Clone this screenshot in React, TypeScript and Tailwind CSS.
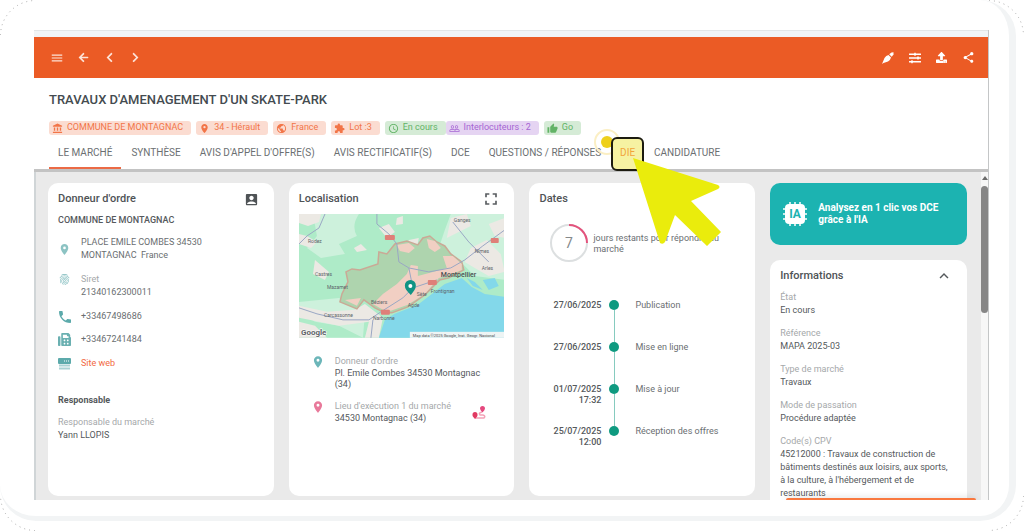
import React from 'react';
import {
  MdAccountBalance,
  MdAccountBox,
  MdExtension,
  MdFingerprint,
  MdFullscreen,
  MdKeyboardArrowUp,
  MdMenu,
  MdPeopleOutline,
  MdPhone,
  MdPlace,
  MdPublic,
  MdSchedule,
  MdShare,
  MdThumbUp,
} from 'react-icons/md';
import { FaArrowLeft, FaChevronLeft, FaChevronRight, FaFax, FaSlidersH, FaUpload } from 'react-icons/fa';

const chips = [
  { label: 'COMMUNE DE MONTAGNAC', icon: MdAccountBalance, tone: 'bg-[#fbdcd1] text-[#f27548] mr-[5px]' },
  { label: '34 - Hérault', icon: MdPlace, tone: 'bg-[#fbdcd1] text-[#f27548] mr-[5px]' },
  { label: 'France', icon: MdPublic, tone: 'bg-[#fbdcd1] text-[#f27548] mr-[5px]' },
  { label: 'Lot :3', icon: MdExtension, tone: 'bg-[#fbdcd1] text-[#f27548] mr-[5px]' },
  { label: 'En cours', icon: MdSchedule, tone: 'bg-[#d5ebd6] text-[#62b366]' },
  { label: 'Interlocuteurs : 2', icon: MdPeopleOutline, tone: 'bg-[#e5d4f2] text-[#a565d3] mr-[5px]' },
  { label: 'Go', icon: MdThumbUp, tone: 'bg-[#d5ebd6] text-[#62b366]' },
];

const tabs = [
  'LE MARCHÉ',
  'SYNTHÈSE',
  "AVIS D'APPEL D'OFFRE(S)",
  'AVIS RECTIFICATIF(S)',
  'DCE',
  'QUESTIONS / RÉPONSES',
  'DIE',
  'CANDIDATURE',
];

const steps = [
  { date: '27/06/2025', time: '', label: 'Publication' },
  { date: '27/06/2025', time: '', label: 'Mise en ligne' },
  { date: '01/07/2025', time: '17:32', label: 'Mise à jour' },
  { date: '25/07/2025', time: '12:00', label: 'Réception des offres' },
];

const infos = [
  { label: 'État', value: 'En cours' },
  { label: 'Référence', value: 'MAPA 2025-03' },
  { label: 'Type de marché', value: 'Travaux' },
  { label: 'Mode de passation', value: 'Procédure adaptée' },
  {
    label: 'Code(s) CPV',
    value: "45212000 : Travaux de construction de bâtiments destinés aux loisirs, aux sports, à la culture, à l'hébergement et de restaurants",
  },
];

function Corner({ className }: { className: string }) {
  return (
    <svg className={`absolute size-9 ${className}`} viewBox="0 0 36 36" fill="none" aria-hidden="true">
      <path d="M0.5 35 A35 35 0 0 1 35 0.5" stroke="#aaa" strokeWidth="1" strokeDasharray="1 4" />
    </svg>
  );
}

function TopBar() {
  return (
    <header className="flex h-[41px] shrink-0 items-center justify-between bg-[#eb5b25] pr-[13px] pl-4 text-[#fde3d8]">
      <div className="flex items-center gap-3">
        <button aria-label="Menu"><MdMenu size={14} /></button>
        <button aria-label="Retour" className="flex w-[14px] justify-center"><FaArrowLeft size={11} /></button>
        <button aria-label="Précédent" className="flex w-[14px] justify-center"><FaChevronLeft size={11} /></button>
        <button aria-label="Suivant" className="flex w-[14px] justify-center"><FaChevronRight size={11} /></button>
      </div>
      <div className="flex items-center gap-[15px] text-white">
        <button aria-label="Annoter">
          <svg width="12" height="12" viewBox="0 0 12 12" fill="currentColor" aria-hidden="true">
            <path d="M0 12 L2.500 6 Q4 3.500 6.500 3 L9 5.500 Q8.500 8 6 9.500 L1.500 11Z" />
            <path d="M7.200 2.300 L9.500 0.500 L11.500 0.300 L11.500 2.500 L9.700 4.800Z" />
          </svg>
        </button>
        <button aria-label="Filtrer"><FaSlidersH size={12} /></button>
        <button aria-label="Exporter"><FaUpload size={11} /></button>
        <button aria-label="Partager"><MdShare size={13} /></button>
      </div>
    </header>
  );
}

function Pointer() {
  return (
    <>
      <span className="absolute -top-[8px] -left-[17px] size-[26px] rounded-full border-2 border-[#fbefc4] p-[5px]">
        <span className="block size-3 rounded-full bg-[#eed01c]" />
      </span>
      <span className="absolute inset-x-0 top-0 h-[34px] rounded-md border-2 border-[#1c1b10] bg-[#f6f2a2]" />
      <svg className="absolute top-5 left-[21px] h-[90px] w-[90px]" viewBox="0 0 90 90" aria-hidden="true">
        <path
          d="M1 1 L86 28 Q89 30 86 32 L59 44 L89 75 L75 89 L43 58 L33 85 Q31 88 28 86 Z"
          fill="#eaec0c"
        />
      </svg>
    </>
  );
}

function Heading() {
  return (
    <div className="relative z-10 shrink-0 border-b-[3px] border-[#c3c3c3] bg-white px-[15px]">
      <h1 className="pt-[14px] text-[13px] leading-4 font-medium text-[#444b50]">
        TRAVAUX D'AMENAGEMENT D'UN SKATE-PARK
      </h1>
      <div className="mt-[13px] flex">
        {chips.map(({ label, icon: Icon, tone }) => (
          <span key={label} className={`flex h-[14px] items-center gap-1 rounded-[3px] pr-2 pl-[3px] text-[9px] whitespace-nowrap ${tone}`}>
            <Icon size={11} />
            {label}
          </span>
        ))}
      </div>
      <nav className="mt-[2px] flex gap-px text-[10px] text-[#6b6f72]">
        {tabs.map((tab, i) => (
          <a
            key={tab}
            href="#"
            className={`relative h-8 px-[9px] leading-8 whitespace-nowrap ${i === 0 ? 'shadow-[inset_0_-2px_0_#eb6a45]' : ''}`}
          >
            {tab === 'DIE' && <Pointer />}
            <span className={tab === 'DIE' ? 'relative text-[#f2a43a]' : ''}>{tab}</span>
          </a>
        ))}
      </nav>
    </div>
  );
}

function Card({ title, action, children }: { title: string; action?: React.ReactNode; children: React.ReactNode }) {
  return (
    <section className="rounded-[10px] bg-white px-[10px] pt-2">
      <div className="flex h-4 items-center justify-between">
        <h2 className="text-[11px] font-medium text-[#4f5356]">{title}</h2>
        {action}
      </div>
      {children}
    </section>
  );
}

function Buyer() {
  return (
    <Card title="Donneur d'ordre" action={<button aria-label="Contacts" className="mr-[5px]"><MdAccountBox size={15} color="#4f5356" /></button>}>
      <p className="mt-[5px] text-[9px] leading-4 font-medium">COMMUNE DE MONTAGNAC</p>
      <ul className="mt-2 text-[9px] leading-[13px] text-[#6a6e71]">
        <li className="flex items-center gap-[10px]">
          <MdPlace size={13} color="#8cc3c3" />
          <span>PLACE EMILE COMBES 34530<br />MONTAGNAC&nbsp; France</span>
        </li>
        <li className="mt-[11px] flex gap-[10px]">
          <MdFingerprint size={13} color="#7ab8ba" />
          <span><span className="text-[#a5a8aa]">Siret</span><br />21340162300011</span>
        </li>
        <li className="mt-[11px] flex items-center gap-[10px]">
          <span className="flex h-[13px] w-[13px] items-center justify-center"><MdPhone className="shrink-0" size={16} color="#5caaab" /></span>
          +33467498686
        </li>
        <li className="mt-[10px] flex items-center gap-[10px]"><FaFax size={13} color="#6ab0b1" />+33467241484</li>
        <li className="mt-[11px] flex items-center gap-[10px]">
          <svg width="13" height="12" viewBox="0 0 13 12" aria-hidden="true">
            <rect width="13" height="6" rx="1" fill="#5caaab" />
            <path d="M6 3h1M8 3h1M10 3h1" stroke="#fff" />
            <path d="M1 7.5h11M1 10.5h11" stroke="#a9d2d3" strokeWidth="2" />
          </svg>
          <a href="#" className="text-[#f2693f]">Site web</a>
        </li>
      </ul>
      <h3 className="mt-[22px] text-[9px] leading-4 font-bold">Responsable</h3>
      <p className="mt-2 text-[9px] leading-[13px] text-[#a5a8aa]">Responsable du marché</p>
      <p className="text-[9px] leading-[13px]">Yann LLOPIS</p>
    </Card>
  );
}

function RegionMap() {
  return (
    <svg className="mt-[7px] block w-full" viewBox="0 0 206 124" fontFamily="Roboto, sans-serif" aria-label="Carte">
      <rect width="206" height="124" fill="#aeebc8" />
      <g fill="#cdf1dc">
        <path d="M14 0 L60 0 Q52 12 58 22 L40 30 L46 40 L22 44 L8 34 L18 22Z" />
        <path d="M152 0 L206 0 L206 66 L176 62 L158 44 L140 34 L146 16Z" />
        <path d="M0 88 L40 84 L66 100 L64 124 L40 112 L16 108 L0 98Z" />
      </g>
      <g fill="#ece9e4">
        <path d="M0 0 L22 0 L20 8 L9 12 L0 9Z" />
        <path d="M0 20 L8 22 L18 28 L12 34 L0 30Z" />
        <path d="M80 14 L90 10 L96 18 L88 24Z" />
        <path d="M98 4 L104 2 L104 10 L97 11Z" />
        <path d="M55 34 L62 30 L68 36 L58 38Z" />
        <path d="M16 46 L30 58 L26 66 L14 60Z" />
        <path d="M110 26 L120 24 L118 34 L108 32Z" />
        <path d="M152 4 L168 0 L172 12 L160 18 L148 24Z" />
        <path d="M172 34 L188 26 L202 40 L206 58 L190 62 L176 54 L166 48Z" />
        <path d="M190 10 L206 4 L206 24 L196 22Z" />
        <path d="M0 92 L28 98 L56 96 L66 90 L84 104 L80 124 L66 124 L70 108 L40 112 L0 104Z" />
        <path d="M0 108 L16 112 L28 124 L0 124Z" />
      </g>
      <path d="M206 83 L186 80 L173 73 L163 64 L146 70 L133 80 L119 91 L96 100 L86 106 L80 124 L206 124Z" fill="#83d8ea" />
      <path d="M184 66 L196 64 L200 72 L190 76Z M168 64 L176 68 L184 76 L174 72Z" fill="#83d8ea" />
      <path
        d="M43 80 L49 68 L47 58 L53 55 L61 56 L79 50 L80 38 L88 40 L96 30 L108 27 L119 31 L124 24 L131 22 L138 28 L146 32 L152 40 L163 48 L165 56 L150 64 L141 66 L126 81 L109 93 L93 99 L86 99 L76 94 L65 86 L58 95 L41 88Z"
        fill="#aed4ae"
        stroke="#caa996"
        strokeWidth="1.500"
      />
      <g fill="#f1cfc3">
        <path d="M98 31 L110 29 L116 34 L110 39 L101 37Z" />
        <path d="M128 25 L136 27 L142 34 L136 38 L130 34Z" />
        <path d="M144 42 L154 42 L163 50 L163 56 L148 62 L140 64 L126 80 L109 91 L92 97 L84 96 L74 90 L84 80 L98 70 L108 60 L112 51 L119 52 L119 62 L134 58 L148 54Z" />
        <path d="M46 86 L62 84 L58 92Z" />
      </g>
      <g fill="none" stroke="#9aa7c4" strokeWidth="1">
        <path d="M26 0 L20 14 L8 22 L0 30" />
        <path d="M78 0 L78 10 L90 20 L98 30 L100 48 L110 54 L130 58 L152 54 L166 46 L184 32 L206 16" />
        <path d="M0 94 L18 100 L44 106 L70 106 L82 98 L104 84 L114 74 L138 66" />
        <path d="M114 74 L110 54 M154 8 L170 28 L190 48 M74 106 L72 124" />
      </g>
      <g fill="#df7f78">
        <rect x="86" y="21" width="10" height="5" rx="1" />
        <rect x="192" y="24" width="8" height="5" rx="1" />
        <rect x="129" y="66" width="9" height="5" rx="1" />
        <rect x="82" y="96" width="9" height="5" rx="1" />
      </g>
      <g fill="#5c6468" fontSize="5">
        <text x="155" y="8">Ganges</text>
        <text x="9" y="29">Rodez</text>
        <text x="176" y="39">Nîmes</text>
        <text x="183" y="56">Arles</text>
        <text x="16" y="62">Castres</text>
        <text x="28" y="75">Mazamet</text>
        <text x="72" y="90">Béziers</text>
        <text x="25" y="103">Carcassonne</text>
        <text x="74" y="106">Narbonne</text>
        <text x="109" y="93">Agde</text>
        <text x="132" y="79">Frontignan</text>
        <text x="118" y="82">Sète</text>
      </g>
      <text x="142" y="63" fontSize="7" fontWeight="500" fill="#4b4f52">Montpellier</text>
      <path d="M112 81 C108 77 106 75 106 71.500 A5.500 5.500 0 0 1 117 71.500 C117 75 115 77 112 81Z" fill="#109384" />
      <circle cx="111.500" cy="72" r="2" fill="#fff" />
      <rect x="111" y="118" width="95" height="6" fill="#eef4f4" />
      <text x="114" y="123" fontSize="4" fill="#45494c">Map data ©2025 Google, Inst. Geogr. Nacional</text>
      <text x="2" y="121" fontSize="8" fontWeight="700" fill="#5d6366" stroke="#fff" strokeWidth="1" paintOrder="stroke">Google</text>
    </svg>
  );
}

function Location() {
  return (
    <Card title="Localisation" action={<button aria-label="Plein écran" className="mr-[3px]"><MdFullscreen size={20} color="#5a5e61" /></button>}>
      <RegionMap />
      <ul className="mt-[17px] text-[9px] leading-[11px]">
        <li className="flex gap-[10px] pl-3">
          <MdPlace size={14} className="shrink-0" color="#6cb6b9" />
          <p className="pr-4"><span className="block leading-[13px] text-[#a5a8aa]">Donneur d'ordre</span>Pl. Emile Combes 34530 Montagnac (34)</p>
        </li>
        <li className="mt-[10px] flex gap-[10px] pl-3">
          <MdPlace size={14} className="shrink-0" color="#e8799a" />
          <p className="flex-1"><span className="block leading-[13px] text-[#a5a8aa]">Lieu d'exécution 1 du marché</span>34530 Montagnac (34)</p>
          <svg className="mt-[6px] mr-[18px]" width="14" height="14" viewBox="0 0 14 14" fill="none" aria-hidden="true">
            <path d="M3 12 H12 Q14 10 11 9 H8 Q6 7 10 6" stroke="#f3a3b8" strokeWidth="1.500" />
            <path d="M3 13 Q0 10 0.500 8.500 A2.500 2.500 0 0 1 5.500 8.500 Q6 10 3 13Z" fill="#e13a62" />
            <path d="M10.500 6.500 Q8 4 8 2.500 A2.500 2.500 0 0 1 13 2.500 Q13 4 10.500 6.500Z" fill="#e5487e" />
          </svg>
        </li>
      </ul>
    </Card>
  );
}

function Dates() {
  return (
    <Card title="Dates">
      <div className="mt-4 flex gap-1 pr-4 pl-[10px] text-[9px] leading-[11px] text-[#6a6e71]">
        <svg className="shrink-0" width="40" height="40" viewBox="0 0 40 40" fill="none">
          <circle cx="20" cy="20" r="18" stroke="#dcdfe0" strokeWidth="2" />
          <path d="M20 2 A18 18 0 0 1 38 20" stroke="#e4527c" strokeWidth="2" />
          <text x="20" y="25" textAnchor="middle" fontSize="14" fill="#85898b">7</text>
        </svg>
        <p className="pt-[10px]">jours restants pour répondre au marché</p>
      </div>
      <ol className="mt-9 text-[9px] leading-[11px]">
        {steps.map((step, i) => (
          <li key={i} className="flex h-[42px]">
            <p className="w-[62px] pt-px text-right font-medium">{step.date}<br />{step.time}</p>
            <span className="ml-2 flex flex-col items-center">
              <span className="mt-px size-[10px] shrink-0 rounded-full bg-[#0f9a80]" />
              {i < steps.length - 1 && <span className="-mb-px w-px flex-1 bg-[#86cbbf]" />}
            </span>
            <p className="ml-4 pt-px text-[#6a6e71]">{step.label}</p>
          </li>
        ))}
      </ol>
    </Card>
  );
}

function AiButton() {
  return (
    <button className="flex h-[62px] shrink-0 items-center gap-[10px] rounded-[10px] bg-[#1cb3b1] px-3 text-left text-[10px] leading-3 font-bold text-white">
      <svg className="shrink-0" width="26" height="26" viewBox="0 0 26 26" fill="none" aria-hidden="true">
        <path d="M8 1v24M13 1v24M18 1v24M1 8h24M1 13h24M1 18h24" stroke="#fff" strokeWidth="1.500" />
        <rect x="3" y="3" width="20" height="20" rx="4" fill="#fff" />
        <text x="13" y="17" textAnchor="middle" fontSize="12" fontWeight="700" fill="#1cb3b1">IA</text>
      </svg>
      <span>Analysez en 1 clic vos DCE grâce à l'IA</span>
    </button>
  );
}

export default function App() {
  return (
    <div className="relative flex h-screen bg-white pr-2 pb-[10px] font-[Roboto,sans-serif] text-[#55595c]">
      <Corner className="top-0 left-0" />
      <Corner className="top-0 right-0 rotate-90" />
      <Corner className="right-0 bottom-0 rotate-180" />
      <Corner className="bottom-0 left-0 -rotate-90" />
      <div className="flex min-w-0 flex-1 rounded-r-[36px] rounded-bl-[36px] border-r-[7px] border-b-[5px] border-[#f2f4f5] pt-[30px] pr-5 pb-4 pl-[34px]">
        <div className="relative flex min-w-0 flex-1 flex-col overflow-hidden border-r border-[#c4c6c7]">
          <div className="h-[7px] shrink-0 border-t border-[#e2e5e6] bg-[#f1f4f6]" />
          <TopBar />
          <Heading />
          <div className="flex min-h-0 flex-1 border-l-2 border-[#d0d5d7] bg-[#eaeaea]">
            <main className="grid min-w-0 flex-1 grid-cols-[226fr_226fr_226fr_197fr] gap-[15px] pt-[11px] pr-[14px] pb-1 pl-3">
              <Buyer />
              <Location />
              <Dates />
              <div className="flex min-h-0 flex-col gap-[15px]">
                <AiButton />
                <Card title="Informations" action={<button aria-label="Replier" className="mr-1"><MdKeyboardArrowUp size={18} /></button>}>
                  <dl className="pr-2 text-[9px] leading-[13px]">
                    {infos.map((info) => (
                      <div key={info.label} className="mb-[10px] first:mt-[7px]">
                        <dt className="text-[#a5a8aa]">{info.label}</dt>
                        <dd>{info.value}</dd>
                      </div>
                    ))}
                  </dl>
                </Card>
              </div>
            </main>
            <div className="w-[7px] bg-[#f7f7f7] pt-1">
              <div className="mx-auto size-0 border-x-[3px] border-b-4 border-x-transparent border-b-[#6b6b6b]" />
              <div className="mt-[6px] h-[127px] rounded-full bg-[#868686]" />
            </div>
          </div>
          <div className="absolute right-3 bottom-0 h-[2px] w-[190px] rounded-t-full bg-[#f9783f] shadow-[0_0_6px_#00000040]" />
        </div>
      </div>
    </div>
  );
}
